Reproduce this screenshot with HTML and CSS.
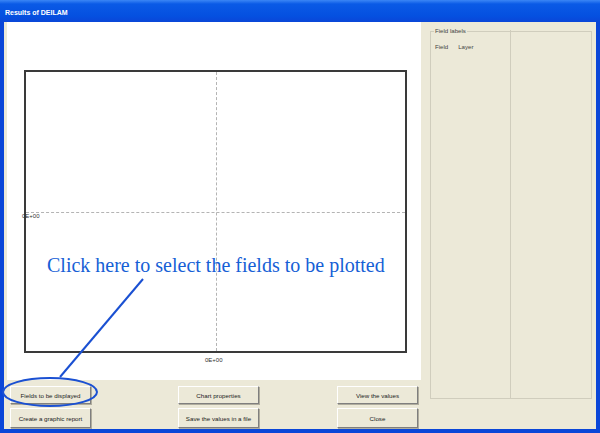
FILE: index.html
```html
<!DOCTYPE html>
<html lang="en">
<head>
    <meta charset="UTF-8">
    <title>Results of DEILAM</title>
    <link rel="stylesheet" href="styles.css">
</head>
<body>

    <div class="window">

        <div class="titlebar">Results of DEILAM</div>

        <div class="client">

            <!-- Chart and buttons -->
            <div class="main">
                <div class="chart">
                    <div class="plot">
                        <div class="grid-v"></div>
                        <div class="grid-h"></div>
                    </div>
                    <span class="axis-label axis-y">0E+00</span>
                    <span class="axis-label axis-x">0E+00</span>
                </div>

                <div class="buttons">
                    <button class="btn">Fields to be displayed</button>
                    <button class="btn">Chart properties</button>
                    <button class="btn">View the values</button>
                    <button class="btn tall">Create a graphic report</button>
                    <button class="btn tall">Save the values in a file</button>
                    <button class="btn tall">Close</button>
                </div>
            </div>

            <!-- Field labels list -->
            <div class="side">
                <fieldset class="labels">
                    <legend>Field labels</legend>
                    <div class="cols">
                        <div class="col first"><span>Field</span><span>Layer</span></div>
                        <div class="col"></div>
                    </div>
                </fieldset>
            </div>

        </div>

        <!-- Annotation drawn over the window -->
        <svg class="callout" width="600" height="433" viewBox="0 0 600 433">
            <line x1="143" y1="279" x2="60" y2="377" stroke="#1a50d2" stroke-width="2"/>
            <ellipse cx="50" cy="392" rx="47" ry="14" fill="none" stroke="#1a50d2" stroke-width="2"/>
        </svg>
        <div class="callout-text">Click here to select the fields to be plotted</div>

    </div>

</body>
</html>
```

FILE: styles.css
```css
body {
    margin: 0;
    padding: 0;
    font-family: "Liberation Sans", Arial, sans-serif;
}

.window {
    position: relative;
    width: 600px;
    height: 433px;
    box-sizing: border-box;
    border: 4px solid #0a46d8;
    border-top: none;
    background-color: #ece9d8;
    display: flex;
    flex-direction: column;
}

.titlebar {
    height: 22px;
    margin: 0 -4px;
    padding-left: 5px;
    background: linear-gradient(#3b86f5 0, #0a5ae6 4px, #0550e0 16px, #0a46d8 22px);
    color: white;
    font-weight: bold;
    font-size: 7px;
    line-height: 26px;
    box-sizing: border-box;
}

.client {
    flex: 1;
    display: flex;
}

.main {
    display: flex;
    flex-direction: column;
}

.chart {
    position: relative;
    margin-left: 3px;
    width: 414px;
    height: 358px;
    background-color: white;
}

.plot {
    position: relative;
    margin: 48px 0 0 17px;
    width: 383px;
    height: 283px;
    box-sizing: border-box;
    border: 2px solid #3a3a3a;
}

.grid-v {
    position: absolute;
    left: 190px;
    top: 0;
    bottom: 0;
    border-left: 1px dashed #b4b4b4;
}

.grid-h {
    position: absolute;
    top: 140px;
    left: 0;
    right: 0;
    border-top: 1px dashed #b4b4b4;
}

.axis-label {
    position: absolute;
    font-size: 6px;
    line-height: 7px;
    color: #333;
}

.axis-y {
    left: 15px;
    top: 191px;
}

.axis-x {
    left: 198px;
    top: 335px;
}

.buttons {
    display: grid;
    grid-template-columns: 168px 159px 81px;
    grid-template-rows: 18px 20px;
    row-gap: 4px;
    margin: 6px 0 0 6px;
}

.btn {
    width: 81px;
    height: 18px;
    padding: 0;
    font-family: "Liberation Sans", Arial, sans-serif;
    font-size: 6.2px;
    color: #222;
    background-color: #ece9d8;
    border: 1px solid;
    border-color: #fff #7f7f7f #7f7f7f #fff;
    box-shadow: 1px 1px 0 #b0ad9e;
}

.btn.tall {
    height: 20px;
}

.side {
    margin-left: 9px;
    padding-top: 4px;
}

.labels {
    margin: 0;
    padding: 0;
    width: 161px;
    height: 373px;
    box-sizing: border-box;
    border: 1px solid #d0cdbd;
    font-size: 6.1px;
    color: #444;
    display: flex;
    flex-direction: column;
}

.labels legend {
    margin-left: 3px;
    padding: 0 1px;
    line-height: 10px;
}

.cols {
    flex: 1;
    display: flex;
    margin-top: -6px;
}

.col {
    width: 80px;
}

.col.first {
    border-right: 1px solid #d0cdbd;
    padding: 13px 0 0 4px;
    box-sizing: border-box;
    display: flex;
    gap: 10px;
    align-items: flex-start;
}

.callout {
    position: absolute;
    left: -4px;
    top: 0;
    pointer-events: none;
}

.callout-text {
    position: absolute;
    left: 43px;
    top: 255px;
    font-family: "Liberation Serif", "Times New Roman", serif;
    font-size: 20px;
    line-height: 20px;
    color: #1660d6;
    white-space: nowrap;
}
```
